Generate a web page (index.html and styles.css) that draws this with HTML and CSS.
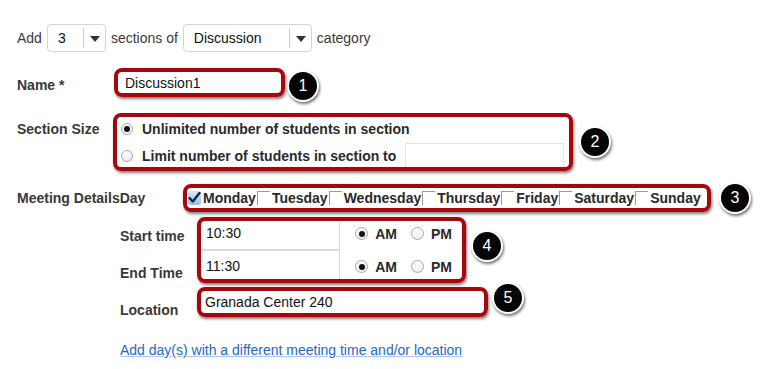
FILE: index.html
```html
<!DOCTYPE html>
<html lang="en">
<head>
    <meta charset="UTF-8">
    <meta name="viewport" content="width=device-width, initial-scale=1.0">
    <title>Add Sections</title>
    <link rel="stylesheet" href="styles.css">
</head>
<body>
    <div class="form">
        <!-- How many sections and which category -->
        <div class="row add-row">
            <span>Add</span>
            <div class="select select-count"><span class="select-value">3</span><span class="select-arrow"></span></div>
            <span>sections of</span>
            <div class="select select-category"><span class="select-value">Discussion</span><span class="select-arrow"></span></div>
            <span>category</span>
        </div>

        <div class="row name-row">
            <div class="label name-label">Name *</div>
            <div class="hl name-box">Discussion1</div>
            <div class="badge badge-1">1</div>
        </div>

        <div class="row size-row">
            <div class="label size-label">Section Size</div>
            <div class="hl size-box">
                <div class="size-line size-line-1"><span class="radio checked"></span>Unlimited number of students in section</div>
                <div class="size-line size-line-2"><span class="radio"></span>Limit number of students in section to<span class="size-input"></span></div>
            </div>
            <div class="badge badge-2">2</div>
        </div>

        <div class="row day-row">
            <div class="label day-label">Meeting Details<span>Day</span></div>
            <div class="hl days">
                <span class="day"><span class="checkbox checked"><svg width="13" height="13" viewBox="0 0 13 13"><path d="M1.5 7 L4.8 10.5 L11.5 2" fill="none" stroke="#13233f" stroke-width="2.4" stroke-linecap="round" stroke-linejoin="round"/></svg></span>Monday</span>
                <span class="day"><span class="checkbox"></span>Tuesday</span>
                <span class="day"><span class="checkbox"></span>Wednesday</span>
                <span class="day"><span class="checkbox"></span>Thursday</span>
                <span class="day"><span class="checkbox"></span>Friday</span>
                <span class="day"><span class="checkbox"></span>Saturday</span>
                <span class="day"><span class="checkbox"></span>Sunday</span>
            </div>
            <div class="badge badge-3">3</div>
        </div>

        <div class="time-block">
            <div class="time-labels">
                <div class="label">Start time</div>
                <div class="label">End Time</div>
                <div class="label">Location</div>
            </div>
            <div class="time-fields">
                <div class="row">
                    <div class="hl time-box">
                        <div class="time-line">
                            <span class="time-input">10:30</span>
                            <span class="radio small checked"></span><span class="ampm">AM</span>
                            <span class="radio small"></span><span class="ampm">PM</span>
                        </div>
                        <div class="time-line">
                            <span class="time-input">11:30</span>
                            <span class="radio small checked"></span><span class="ampm">AM</span>
                            <span class="radio small"></span><span class="ampm">PM</span>
                        </div>
                    </div>
                    <div class="badge badge-4">4</div>
                </div>
                <div class="row loc-row">
                    <div class="hl loc-box">Granada Center 240</div>
                    <div class="badge badge-5">5</div>
                </div>
            </div>
        </div>

        <a class="more-link" href="#">Add day(s) with a different meeting time and/or location</a>
    </div>
</body>
</html>
```

FILE: styles.css
```css
body {
    margin: 0;
    background-color: #fff;
    font-family: "Liberation Sans", Arial, sans-serif;
    font-size: 14px;
    color: #333;
}

.form {
    padding: 24px 0 0 17px;
}

.row {
    display: flex;
    align-items: center;
}

.label {
    font-weight: bold;
    color: #383838;
    line-height: 20px;
}

/* top line with the two dropdowns */
.add-row {
    height: 28px;
    gap: 5px;
    color: #3a3a3a;
}

.select {
    display: flex;
    height: 28px;
    box-sizing: border-box;
    border: 1px solid #d4d4d4;
    border-radius: 4px;
    background-color: #fff;
    color: #111;
}

.select-value {
    flex: 1;
    line-height: 26px;
    padding-left: 10px;
}

.select-arrow {
    width: 21px;
    margin: 3px 0;
    border-left: 1px solid #ccc;
    position: relative;
}

.select-arrow::after {
    content: "";
    position: absolute;
    left: 6px;
    top: 8px;
    border-top: 6px solid #333;
    border-left: 5px solid transparent;
    border-right: 5px solid transparent;
}

.select-count {
    width: 59px;
}

.select-category {
    width: 129px;
}

/* red annotation frame drawn over the content */
.hl {
    position: relative;
    background-color: #fff;
}

.hl::after {
    content: "";
    position: absolute;
    inset: 0;
    border: 4px solid #a6070c;
    border-radius: 8px;
    box-shadow: 1px 2px 3px rgba(0, 0, 0, 0.5);
    pointer-events: none;
}

.badge {
    width: 28px;
    height: 28px;
    border: 2px solid #fff;
    border-radius: 50%;
    background-color: #050505;
    box-shadow: 1px 2px 3px rgba(0, 0, 0, 0.55);
    color: #fff;
    font-size: 16px;
    line-height: 28px;
    text-align: center;
    flex-shrink: 0;
}

.name-row {
    margin-top: 16px;
}

.name-label {
    width: 97px;
    padding-top: 2px;
    margin-bottom: -2px;
}

.name-box {
    width: 171px;
    height: 29px;
    box-sizing: border-box;
    padding-left: 11px;
    line-height: 30px;
    color: #111;
}

.badge-1 {
    margin-left: 2px;
    margin-top: 2px;
    margin-bottom: -5px;
}

.size-row {
    margin-top: 16px;
    align-items: flex-start;
}

.size-label {
    width: 96px;
    margin-top: 6px;
}

.size-box {
    width: 460px;
    height: 58px;
    box-sizing: border-box;
    padding: 3px 8px 0 8px;
}

.size-line {
    display: flex;
    align-items: center;
    white-space: nowrap;
    font-weight: bold;
    color: #2a2a2a;
}

.size-line-1 {
    height: 26px;
}

.size-line-2 {
    height: 28px;
}

.size-input {
    width: 159px;
    height: 27px;
    box-sizing: border-box;
    margin-left: 9px;
    margin-top: 1px;
    border: 1px solid #e4e4e4;
    flex-shrink: 0;
}

.radio {
    width: 12px;
    height: 12px;
    box-sizing: border-box;
    margin-right: 9px;
    border: 1px solid #a9a9a9;
    border-radius: 50%;
    background: linear-gradient(#fdfdfd, #ececec);
    position: relative;
    flex-shrink: 0;
}

.radio.checked::after {
    content: "";
    position: absolute;
    left: 2px;
    top: 2px;
    width: 6px;
    height: 6px;
    border-radius: 50%;
    background-color: #111;
}

.radio.small {
    width: 13px;
    height: 13px;
    margin-right: 7px;
}

.radio.small.checked::after {
    left: 2.5px;
    top: 2.5px;
}

.badge-2 {
    margin-left: 6px;
    align-self: center;
}

.day-row {
    margin-top: 13px;
}

.day-label {
    width: 166px;
}

.days {
    display: flex;
    align-items: center;
    width: 528px;
    height: 28px;
    box-sizing: border-box;
    padding-left: 5px;
    white-space: nowrap;
    font-weight: bold;
    color: #2a2a2a;
}

.day {
    display: flex;
    align-items: center;
    margin-right: 1px;
}

.checkbox {
    width: 13px;
    height: 14px;
    box-sizing: border-box;
    margin-right: 2px;
    border-top: 1px solid #9c9c9c;
    border-left: 1px solid #9c9c9c;
}

.checkbox.checked {
    border: none;
    border-radius: 3px;
    background: linear-gradient(#d6e8fb, #8ebff0);
}

.checkbox svg {
    display: block;
}

.badge-3 {
    margin: -2px 0 -2px 8px;
}

/* start / end time and location */
.time-block {
    display: flex;
    margin-top: 5px;
    margin-left: 103px;
}

.time-labels {
    width: 77px;
    margin-top: 1px;
}

.time-labels .label {
    line-height: 37px;
}

.time-box {
    width: 269px;
    height: 66px;
}

.time-line {
    display: flex;
    align-items: center;
    height: 33px;
}

.time-input {
    width: 147px;
    height: 33px;
    box-sizing: border-box;
    margin-left: 3px;
    margin-right: 15px;
    padding-left: 5px;
    border: 1px solid #dcdcdc;
    line-height: 31px;
    color: #111;
}

.ampm {
    font-weight: bold;
    color: #2a2a2a;
    margin-right: 14px;
}

.badge-4 {
    margin-left: 5px;
    align-self: flex-start;
    margin-top: 13px;
}

.loc-row {
    margin-top: 4px;
}

.loc-box {
    width: 291px;
    height: 30px;
    box-sizing: border-box;
    padding-left: 8px;
    line-height: 30px;
    color: #111;
}

.badge-5 {
    margin-left: 4px;
    margin-top: -8px;
}

.more-link {
    display: inline-block;
    margin-top: 11px;
    margin-left: 103px;
    line-height: 20px;
    color: #2468c8;
    text-decoration: underline;
    text-decoration-color: #a8c6ef;
}
```
